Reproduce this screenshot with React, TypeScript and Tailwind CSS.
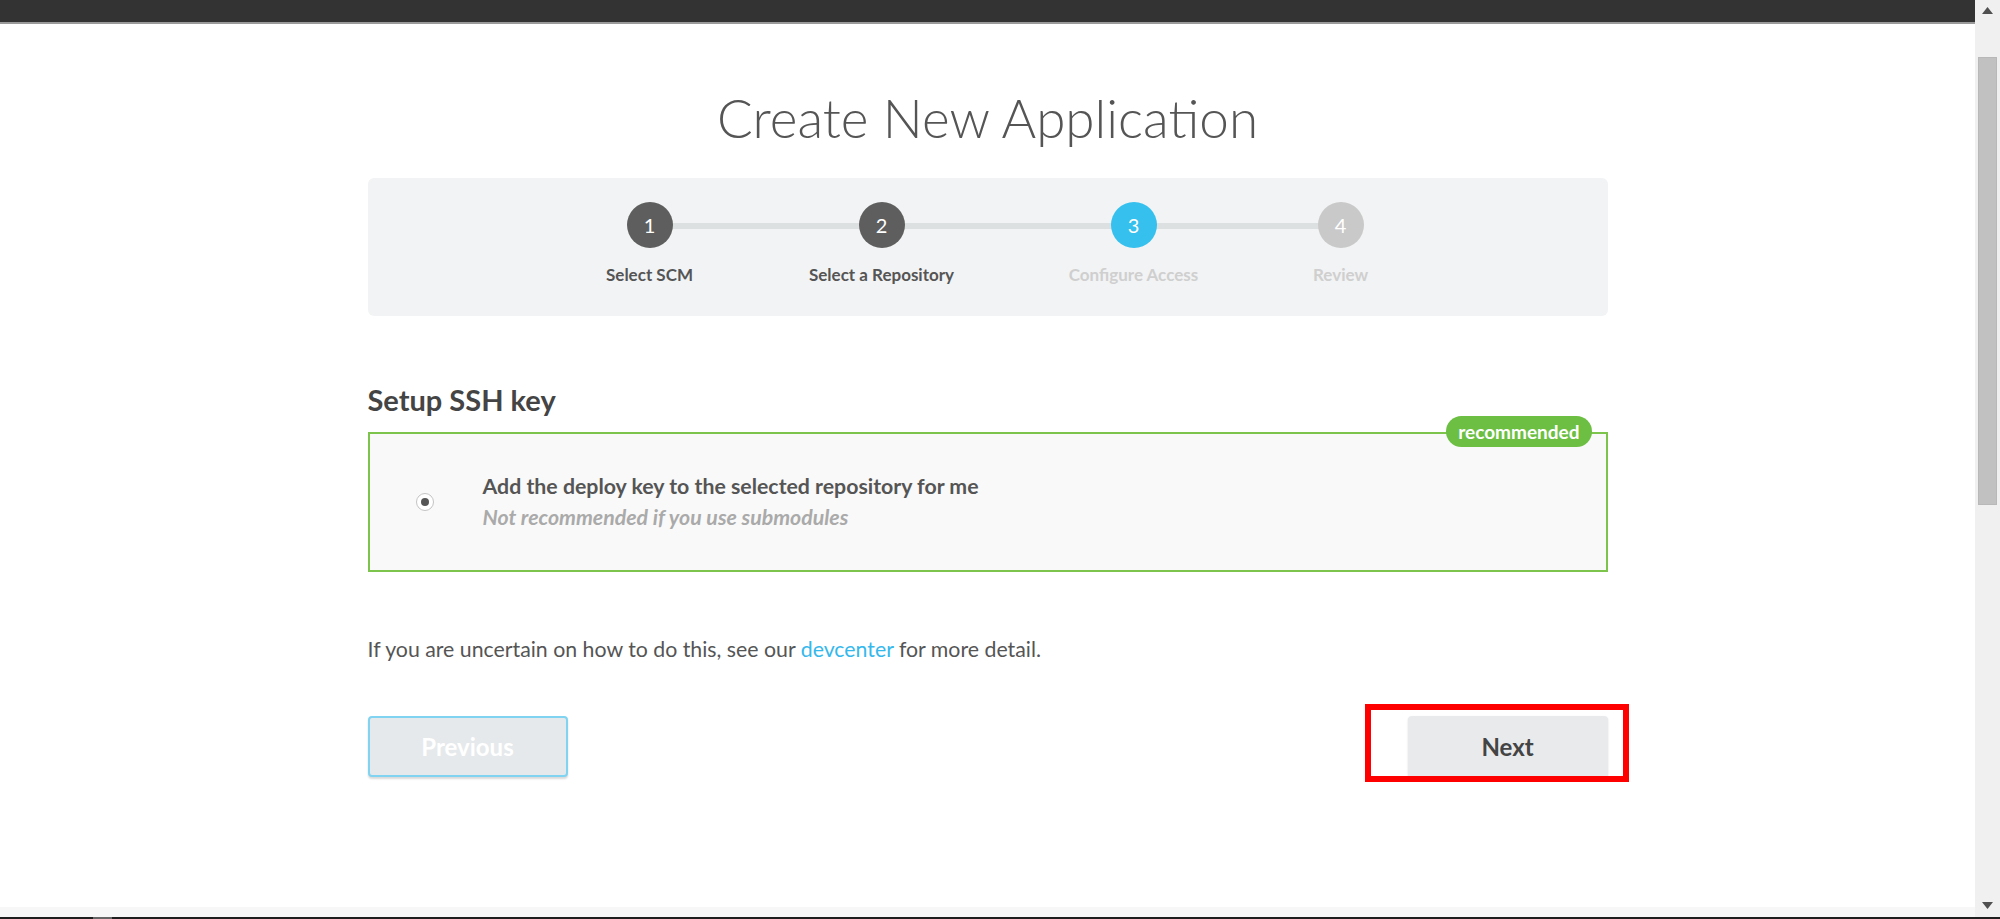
import React from "react";

const steps = [
  { n: "1", label: "Select SCM", w: "w-[90px]", circle: "bg-[#5e5e5e]", text: "text-[#555555]" },
  { n: "2", label: "Select a Repository", w: "w-[150px]", circle: "bg-[#5e5e5e]", text: "text-[#555555]" },
  { n: "3", label: "Configure Access", w: "w-[130px]", circle: "bg-[#35c0ee]", text: "text-[#cfcfcf]" },
  { n: "4", label: "Review", w: "w-[60px]", circle: "bg-[#c9c9c9]", text: "text-[#cfcfcf]" },
];

export default function App() {
  return (
    <div className="w-[2000px] h-[919px] flex flex-col overflow-hidden bg-white" style={{ fontFamily: "Lato, 'Noto Sans', sans-serif" }}>
      <div className="flex flex-1 min-h-0">
        <div className="flex-1 flex flex-col min-w-0">
          <div className="h-[22px] bg-[#333333]" />
          <div className="h-[2px] bg-[#9a9a9a]" />
          <div className="w-[1240px] mx-auto flex flex-col">
            <h1 className="mt-[59px] h-[70px] leading-[70px] text-center text-[53px] font-light text-[#555555]">
              Create New Application
            </h1>
            <div className="mt-[25px] h-[138px] rounded-[6px] bg-[#f2f3f4] flex justify-center">
              <div className="relative flex gap-[112px] pt-[24px] h-fit">
                <div className="absolute left-[45px] right-[30px] top-[45px] h-[6px] bg-[#dde0e1]" />
                {steps.map((s) => (
                  <div key={s.n} className={`relative flex flex-col items-center ${s.w}`}>
                    <div className={`w-[46px] h-[46px] rounded-full ${s.circle} flex items-center justify-center text-white text-[20px] leading-none`}>
                      {s.n}
                    </div>
                    <div className={`mt-[16px] leading-[22px] text-[17px] font-bold whitespace-nowrap ${s.text}`}>{s.label}</div>
                  </div>
                ))}
              </div>
            </div>
            <h2 className="mt-[67px] leading-[34px] text-[29px] font-bold text-[#444444]">Setup SSH key</h2>
            <div className="relative mt-[15px] h-[140px] border-2 border-[#7cc44c] bg-[#f9f9f9] flex items-center pl-[46px]">
              <div className="absolute -top-[18px] right-[14px] h-[31px] px-[12px] rounded-full bg-[#6cbf42] text-white text-[19px] font-bold leading-[31px]">
                recommended
              </div>
              <div className="w-[18px] h-[18px] rounded-full border border-[#c4c4c4] bg-white flex items-center justify-center">
                <div className="w-[8px] h-[8px] rounded-full bg-[#555555]" />
              </div>
              <div className="ml-[49px] flex flex-col">
                <div className="leading-[31px] text-[21.3px] font-bold text-[#555555]">
                  Add the deploy key to the selected repository for me
                </div>
                <div className="leading-[31px] text-[21.3px] font-bold italic text-[#aaaaaa]">
                  Not recommended if you use submodules
                </div>
              </div>
            </div>
            <p className="mt-[62px] leading-[30px] text-[21.3px] text-[#555555]">
              If you are uncertain on how to do this, see our <span className="text-[#35b8ec]">devcenter</span> for more detail.
            </p>
            <div className="mt-[52px] flex justify-between">
              <button className="w-[200px] h-[61px] rounded-[4px] border-2 border-[#80d4f1] bg-[#e6e9eb] text-white text-[24px] font-bold shadow-[0_2px_2px_rgba(0,0,0,0.15)]">
                Previous
              </button>
              <div className="relative">
                <button className="w-[200px] h-[61px] rounded-[4px] bg-[#e8eaec] text-[#444444] text-[24px] font-bold shadow-[0_1px_2px_rgba(0,0,0,0.15)]">
                  Next
                </button>
                <div className="absolute -left-[43px] -top-[12px] -right-[21px] -bottom-[5px] border-[6px] border-[#ff0000] pointer-events-none" />
              </div>
            </div>
          </div>
          <div className="mt-auto h-[10px] bg-[#f7f7f7]" />
        </div>
        <div className="w-[25px] bg-[#f0f0f0] flex flex-col items-center">
          <div className="h-[14px] flex items-end">
            <svg width="11" height="7" viewBox="0 0 11 7"><path d="M5.5 0 L11 7 L0 7 Z" fill="#505050" /></svg>
          </div>
          <div className="mt-[43px] w-[19px] h-[448px] bg-[#c1c1c1] border border-[#b8b8b8]" />
          <div className="mt-auto mb-[8px]">
            <svg width="11" height="7" viewBox="0 0 11 7"><path d="M0 0 L11 0 L5.5 7 Z" fill="#505050" /></svg>
          </div>
        </div>
      </div>
      <div className="h-[2px] bg-[#1e1e1e] flex">
        <div className="ml-[93px] w-[19px] bg-[#666666]" />
      </div>
    </div>
  );
}
